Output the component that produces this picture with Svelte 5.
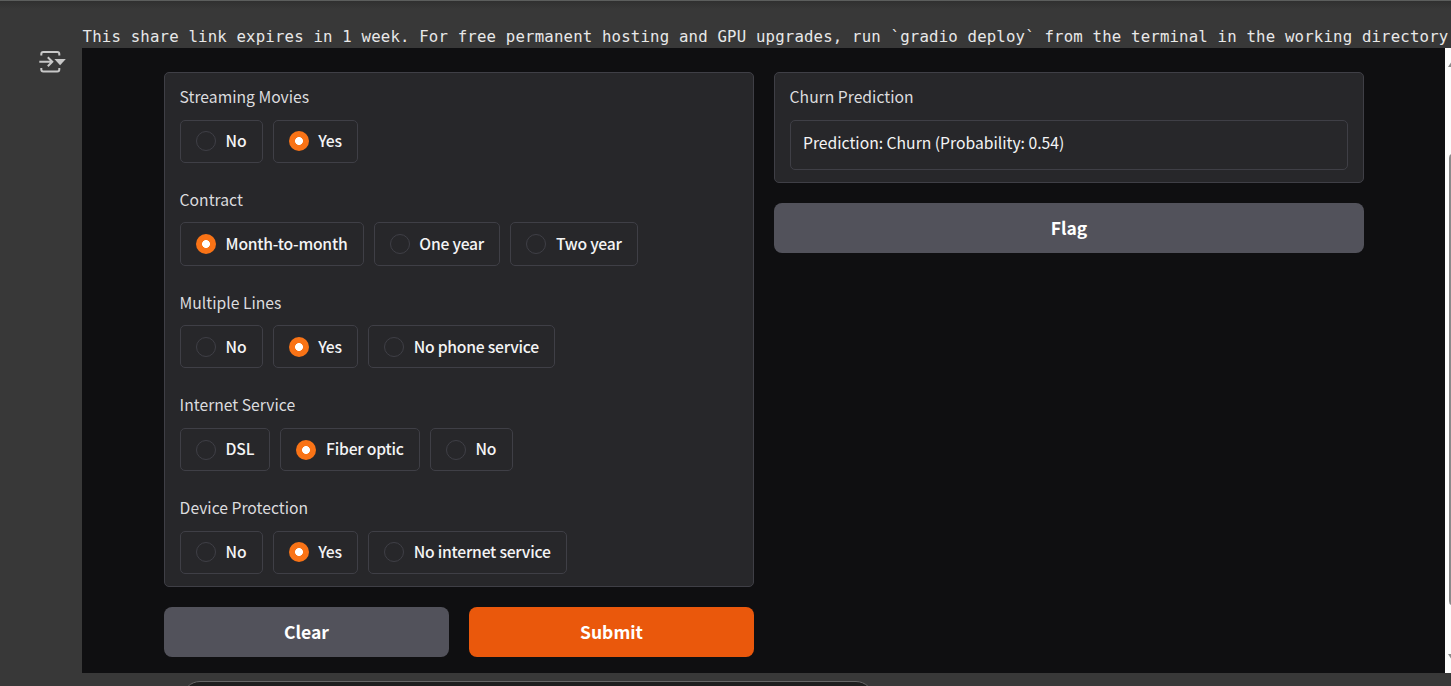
<script>
  let groups = $state([
    { label: 'Streaming Movies', options: ['No', 'Yes'], value: 'Yes' },
    { label: 'Contract', options: ['Month-to-month', 'One year', 'Two year'], value: 'Month-to-month' },
    { label: 'Multiple Lines', options: ['No', 'Yes', 'No phone service'], value: 'Yes' },
    { label: 'Internet Service', options: ['DSL', 'Fiber optic', 'No'], value: 'Fiber optic' },
    { label: 'Device Protection', options: ['No', 'Yes', 'No internet service'], value: 'Yes' }
  ]);
</script>

<div class="page">
  <aside class="gutter">
    <svg width="28" height="24" viewBox="0 0 28 24" fill="none" stroke="#c8c8c8" stroke-width="2">
      <path d="M3.3 5.6V4Q3.3 2 5.3 2H19.3Q21.3 2 21.3 4V5.6M3.3 18V19.4Q3.3 21.4 5.3 21.4H19.3Q21.3 21.4 21.3 19.4V18" />
      <path d="M1.3 11.7H14M9.8 7.2L14.3 11.7L9.8 16.2" />
      <path d="M16.4 9.1H27.8L22.1 15.2Z" fill="#c8c8c8" stroke="none" />
    </svg>
  </aside>
  <main class="output">
    <div class="log">This share link expires in 1 week. For free permanent hosting and GPU upgrades, run `gradio deploy` from the terminal in the working directory</div>
    <div class="frame">
      <div class="app">
        <section class="column">
          <div class="panel form">
            {#each groups as group}
              <div class="group">
                <div class="label">{group.label}</div>
                <div class="options">
                  {#each group.options as option}
                    <button class="option" onclick={() => (group.value = option)}>
                      <span class="radio" class:checked={group.value === option}></span>
                      <span class="caption">{option}</span>
                    </button>
                  {/each}
                </div>
              </div>
            {/each}
          </div>
          <div class="actions">
            <button class="action">Clear</button>
            <button class="action primary">Submit</button>
          </div>
        </section>
        <section class="column">
          <div class="panel result">
            <div class="label">Churn Prediction</div>
            <div class="textbox">Prediction: Churn (Probability: 0.54)</div>
          </div>
          <button class="action">Flag</button>
        </section>
      </div>
      <div class="scrollbar">
        <svg width="6" height="625" viewBox="0 0 6 625">
          <path d="M3 19L7 13V19ZM3 606H7V612Z" fill="#8b8b8b" />
          <path d="M6 106Q4 107 4 110V553Q4 556 6 557Z" fill="#8b8b8b" />
        </svg>
      </div>
    </div>
    <div class="next-cell"></div>
  </main>
</div>

<style>
  :global(body) {
    margin: 0;
    overflow: hidden;
    background: #383838;
  }
  .page {
    box-sizing: border-box;
    display: flex;
    width: 1451px;
    height: 686px;
    overflow: hidden;
    border-top: 1px solid #5c5e5d;
    background: linear-gradient(#303030, #383838 8px);
    font-family: "Noto Sans CJK SC", "Noto Sans", sans-serif;
    font-size: 15.7px;
    color: #f4f4f5;
  }
  .gutter {
    box-sizing: border-box;
    flex: 0 0 82px;
    padding: 49px 0 0 38px;
  }
  .gutter svg { display: block; }
  .output {
    flex: 1;
    min-width: 0;
  }
  .log {
    height: 23px;
    padding-top: 24px;
    padding-left: 0.6px;
    font: 15.7px/23px "DejaVu Sans Mono", monospace;
    letter-spacing: 0.174px;
    white-space: pre;
    color: #e8e8e8;
  }
  .frame {
    display: flex;
    height: 625px;
    background: #0f0f11;
  }
  .app {
    box-sizing: border-box;
    flex: 1;
    display: flex;
    align-items: flex-start;
    gap: 20px;
    padding: 24px 81px 0 82px;
  }
  .column {
    flex: 1;
    display: flex;
    flex-direction: column;
    gap: 20px;
  }
  .panel {
    box-sizing: border-box;
    border: 1px solid #3f3f46;
    border-radius: 5px;
    background: #27272a;
    padding: 11px 15px 0;
  }
  .form { height: 515px; }
  .result { height: 111px; }
  .group { height: 102.8px; }
  .label {
    height: 26px;
    margin-bottom: 9.6px;
    line-height: 26px;
    text-indent: -0.4px;
    color: #dcdcdf;
  }
  .options {
    display: flex;
    gap: 10px;
  }
  button {
    font: inherit;
    color: inherit;
    cursor: pointer;
  }
  .option {
    box-sizing: border-box;
    display: flex;
    align-items: center;
    gap: 9.6px;
    height: 43.2px;
    padding: 0 15.3px 0 15px;
    border: 1px solid #3f3f46;
    border-radius: 5px;
    background: #27272a;
    font-weight: 500;
    letter-spacing: -0.23px;
    white-space: nowrap;
  }
  .caption {
    line-height: 24px;
    padding-bottom: 0.2px;
  }
  .radio {
    box-sizing: border-box;
    width: 20px;
    height: 20px;
    border: 1px solid #3f3f46;
    border-radius: 50%;
  }
  .radio.checked {
    border: 0;
    background: radial-gradient(circle, #fff 3.6px, #f97316 4.3px);
  }
  .textbox {
    box-sizing: border-box;
    height: 50px;
    padding: 0 12px;
    border: 1px solid #3f3f46;
    border-radius: 5px;
    line-height: 43px;
  }
  .actions {
    display: flex;
    gap: 20px;
  }
  .action {
    flex: 1;
    height: 50px;
    min-height: 50px;
    padding: 0;
    border: 0;
    border-radius: 8px;
    background: #52525b;
    color: #fff;
    font-size: 17.5px;
    font-weight: 700;
    line-height: 50px;
  }
  .primary { background: #ea580c; }
  .scrollbar {
    width: 6px;
    background: #fcfcfc;
  }
  .scrollbar svg { display: block; }
  .next-cell {
    box-sizing: border-box;
    width: 692px;
    height: 40px;
    margin: 8px 0 0 100px;
    border: 1px solid #666;
    border-radius: 18px;
    background: #1e1e1e;
  }
</style>
